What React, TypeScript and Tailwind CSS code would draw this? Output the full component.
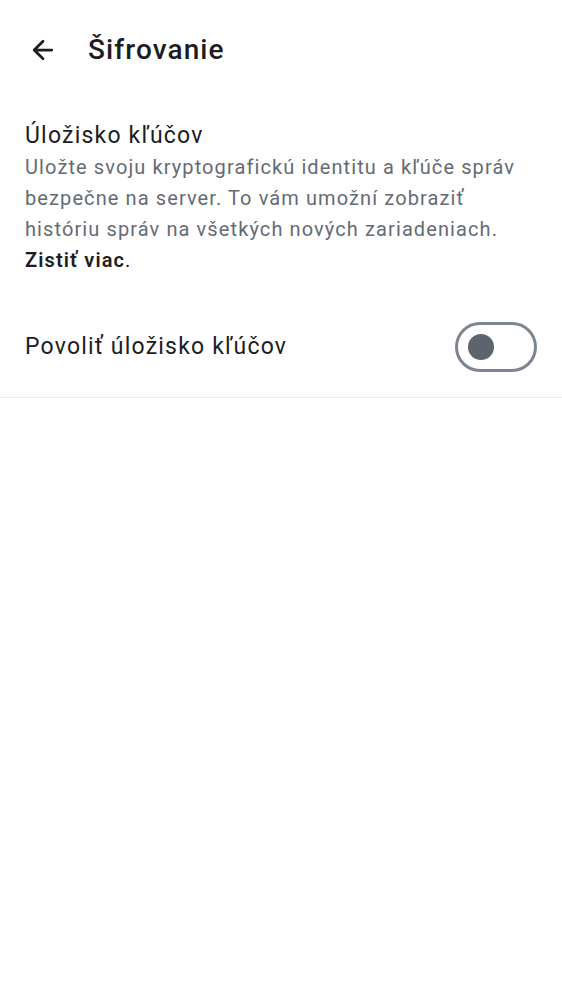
import { ArrowLeft } from "lucide-react";

function Toggle() {
	return (
		<div className="flex h-[50px] w-[82px] items-center rounded-full border-[3px] border-[#7c8591] bg-white pl-[10px]">
			<span className="block size-[26px] rounded-full bg-[#5d646e]" />
		</div>
	);
}

export default function App() {
	return (
		<div className="min-h-[1000px] bg-white font-['Roboto',sans-serif] text-[#1b1d22]">
			<header className="flex h-[100px] items-center gap-[30px] pl-[28px]">
				<ArrowLeft className="size-[30px]" strokeWidth={2.2} />
				<h1 className="text-[28px] font-medium tracking-[1.1px]">Šifrovanie</h1>
			</header>

			<section className="px-[25px] pt-[20px]">
				<h2 className="text-[23px] leading-[32px] tracking-[1.2px]">Úložisko kľúčov</h2>
				<p className="text-[20px] leading-[31px] tracking-[1.1px] text-[#646b75]">
					Uložte svoju kryptografickú identitu a kľúče správ bezpečne na server. To vám umožní
					zobraziť históriu správ na všetkých nových zariadeniach.{" "}
					<span className="block font-semibold text-[#1b1d22]">
						Zistiť viac<span className="font-normal">.</span>
					</span>
				</p>
			</section>

			<div className="flex items-center justify-between border-b border-[#ececec] px-[25px] pt-[46px] pb-[25px]">
				<span className="text-[23px] tracking-[1.2px]">Povoliť úložisko kľúčov</span>
				<Toggle />
			</div>
		</div>
	);
}
